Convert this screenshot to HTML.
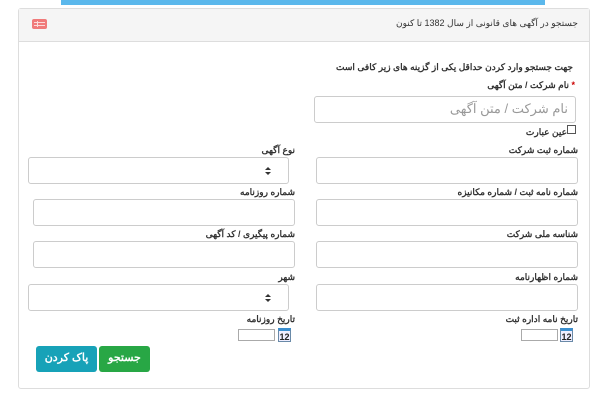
<!DOCTYPE html>
<html><head><meta charset="utf-8"><style>
*{box-sizing:border-box;margin:0;padding:0}
body{width:600px;height:400px;background:#fff;font-family:"Liberation Sans","Noto Sans CJK SC",sans-serif;position:relative;overflow:hidden;color:#222}
.a{position:absolute}
.banner{left:61px;top:0;width:484px;height:5px;background:#5bb8ec}
.panel{left:18px;top:8px;width:572px;height:381px;border:1px solid #ddd;border-radius:3px}
.head{left:19px;top:9px;width:570px;height:33px;background:#f5f5f5;border-bottom:1px solid #ddd}
.t{font-size:9px;direction:rtl;white-space:nowrap;font-weight:bold;color:#333}
.in{border:1px solid #ccc;border-radius:3px;background:#fff}
.sel::after{content:"";position:absolute;right:17px;top:9px;border:3px solid transparent;border-bottom:3px solid #333;border-top:0}
.sel::before{content:"";position:absolute;right:17px;top:14px;border:3px solid transparent;border-top:3px solid #333;border-bottom:0}
.cal{width:13px;height:14px;border:1px solid #6a8aa8;background:#eef;font-size:9px;font-weight:bold;text-align:center;line-height:12px;border-top:3px solid #3a8fd0}
.di{width:37px;height:12px;border:1px solid #aaa;background:#fff}
.btn{color:#fff;font-size:11px;font-weight:bold;text-align:center;line-height:25px;border-radius:3px}
</style></head><body>
<div class="a banner"></div>
<div class="a panel"></div>
<div class="a head"></div>
<div class="a" style="left:32px;top:19px;width:15px;height:10px;background:#f07a7a;border-radius:2px"></div>
<div class="a" style="left:34px;top:22px;width:11px;height:1px;background:#fbdada"></div>
<div class="a" style="left:34px;top:25px;width:11px;height:1px;background:#fbdada"></div>
<div class="a" style="left:37px;top:21px;width:1px;height:6px;background:#fbdada"></div>
<div class="a t" style="right:22px;top:18px;font-weight:normal">جستجو در آگهی های قانونی از سال 1382 تا کنون</div>
<div class="a t" style="right:27px;top:62px">جهت جستجو وارد کردن حداقل یکی از گزینه های زیر کافی است</div>
<div class="a t" style="right:25px;top:80px"><span style="color:#c00">*</span> نام شرکت / متن آگهی</div>
<div class="a in" style="left:314px;top:96px;width:262px;height:27px"></div>
<div class="a" style="right:32px;top:101px;font-size:13px;color:#999;direction:rtl">نام شرکت / متن آگهی</div>
<div class="a" style="left:567px;top:125px;width:9px;height:9px;border:1px solid #555;background:#fff"></div>
<div class="a t" style="right:33px;top:127px">عین عبارت</div>

<div class="a t" style="right:22px;top:145px">شماره ثبت شرکت</div>
<div class="a in" style="left:316px;top:157px;width:262px;height:27px"></div>
<div class="a t" style="right:305px;top:145px">نوع آگهی</div>
<div class="a in sel" style="left:28px;top:157px;width:261px;height:27px"></div>

<div class="a t" style="right:22px;top:187px">شماره نامه ثبت / شماره مکانیزه</div>
<div class="a in" style="left:316px;top:199px;width:262px;height:27px"></div>
<div class="a t" style="right:305px;top:187px">شماره روزنامه</div>
<div class="a in" style="left:33px;top:199px;width:262px;height:27px"></div>

<div class="a t" style="right:22px;top:229px">شناسه ملی شرکت</div>
<div class="a in" style="left:316px;top:241px;width:262px;height:27px"></div>
<div class="a t" style="right:305px;top:229px">شماره پیگیری / کد آگهی</div>
<div class="a in" style="left:33px;top:241px;width:262px;height:27px"></div>

<div class="a t" style="right:22px;top:272px">شماره اظهارنامه</div>
<div class="a in" style="left:316px;top:284px;width:262px;height:27px"></div>
<div class="a t" style="right:305px;top:272px">شهر</div>
<div class="a in sel" style="left:28px;top:284px;width:261px;height:27px"></div>

<div class="a t" style="right:22px;top:314px">تاریخ نامه اداره ثبت</div>
<div class="a di" style="left:521px;top:329px"></div>
<div class="a cal" style="left:560px;top:328px">12</div>
<div class="a t" style="right:305px;top:314px">تاریخ روزنامه</div>
<div class="a di" style="left:238px;top:329px"></div>
<div class="a cal" style="left:278px;top:328px">12</div>

<div class="a btn" style="left:99px;top:346px;width:51px;height:26px;background:#28a745">جستجو</div>
<div class="a btn" style="left:36px;top:346px;width:61px;height:26px;background:#17a2b8">پاک کردن</div>
</body></html>
